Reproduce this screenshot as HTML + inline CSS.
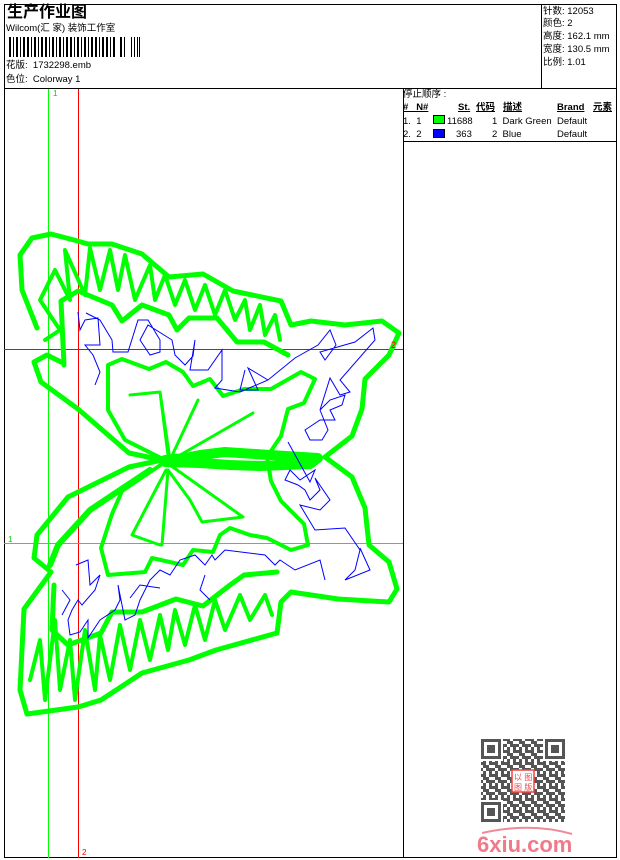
<!DOCTYPE html>
<html><head><meta charset="utf-8"><style>
body{margin:0;width:620px;height:860px;background:#fff;position:relative;overflow:hidden;font-family:"Liberation Sans","WenQuanYi Zen Hei","Noto Sans CJK SC",sans-serif;font-size:9.5px;color:#000}
.t{position:absolute;white-space:nowrap;line-height:10px}
</style></head><body>
<svg width="620" height="860" style="position:absolute;left:0;top:0">
<g stroke="#000" stroke-width="1" fill="none">
<rect x="4.5" y="4.5" width="612" height="853"/>
<line x1="541.5" y1="4" x2="541.5" y2="88"/>
<line x1="4" y1="88.5" x2="617" y2="88.5"/>
<line x1="403.5" y1="88" x2="403.5" y2="858"/>
<line x1="403" y1="141.5" x2="617" y2="141.5"/>
</g>
<g fill="#000">
<rect x="9" y="37" width="2" height="20"/><rect x="13" y="37" width="1" height="20"/><rect x="16" y="37" width="2" height="20"/><rect x="20" y="37" width="1" height="20"/><rect x="23" y="37" width="2" height="20"/><rect x="27" y="37" width="2" height="20"/><rect x="31" y="37" width="1" height="20"/><rect x="34" y="37" width="2" height="20"/><rect x="38" y="37" width="1" height="20"/><rect x="41" y="37" width="2" height="20"/><rect x="45" y="37" width="2" height="20"/><rect x="49" y="37" width="1" height="20"/><rect x="52" y="37" width="2" height="20"/><rect x="56" y="37" width="1" height="20"/><rect x="59" y="37" width="2" height="20"/><rect x="63" y="37" width="1" height="20"/><rect x="66" y="37" width="2" height="20"/><rect x="70" y="37" width="2" height="20"/><rect x="74" y="37" width="1" height="20"/><rect x="77" y="37" width="2" height="20"/><rect x="81" y="37" width="1" height="20"/><rect x="84" y="37" width="2" height="20"/><rect x="88" y="37" width="1" height="20"/><rect x="91" y="37" width="2" height="20"/><rect x="95" y="37" width="2" height="20"/><rect x="99" y="37" width="1" height="20"/><rect x="102" y="37" width="2" height="20"/><rect x="106" y="37" width="2" height="20"/><rect x="110" y="37" width="1" height="20"/><rect x="113" y="37" width="2" height="20"/><rect x="120" y="37" width="2" height="20"/><rect x="124" y="37" width="1" height="20"/><rect x="131" y="37" width="1" height="20"/><rect x="134" y="37" width="1" height="20"/><rect x="137" y="37" width="1" height="20"/><rect x="139" y="37" width="1" height="20"/>
</g>
<rect x="433.5" y="115.5" width="11" height="8" fill="#00ff00" stroke="#000"/>
<rect x="433.5" y="129.5" width="11" height="8" fill="#0000ff" stroke="#000"/>
<line x1="48.5" y1="89" x2="48.5" y2="858" stroke="#00ff00"/>
<line x1="78.5" y1="89" x2="78.5" y2="858" stroke="#ff0000"/>
<line x1="4" y1="349.5" x2="403" y2="349.5" stroke="#ff0000"/>
<line x1="4" y1="543.5" x2="403" y2="543.5" stroke="#00ff00"/>
<g fill="none" stroke="#00ff00" stroke-linejoin="round" stroke-linecap="round">
<path stroke-width="5" d="M37,328 L22,290 L20,255 L32,238 L51,234 L74,240 L88,244 L112,244 L142,254 L169,277 L203,274 L233,291 L281,301 L291,325 L311,321 L345,325 L382,321 L399,333 L389,355 L365,379 L362,409 L352,436 L325,457 L352,477 L365,508 L369,545 L389,562 L397,589 L389,602 L338,599 L291,592 L281,602 L277,633 L216,650 L189,660 L142,673 L101,700 L78,707 L27,714 L20,690 L24,609 L51,572 L34,558 L37,535 L68,497 L129,467 L162,460 L129,453 L78,409 L41,382 L34,362 L47,355 L61,362"/>
<path stroke-width="5" d="M64,365 L61,301 L78,291 L112,305 L122,321 L142,305 L169,315 L177,330 L189,318 L217,318 L237,342 L264,342 L288,355"/>
<path stroke-width="4" d="M165,460 L125,440 L108,410 L108,365 L122,359 L149,369 L166,362 L183,372 L193,386 L210,379 L223,396 L244,389 L271,389 L301,372 L315,379 L304,403 L288,409 L281,436 L267,457 L271,481 L281,501 L304,524 L308,545 L291,550 L267,538 L250,535 L230,528 L220,535 L213,552 L193,550 L183,565 L152,558 L145,572 L108,575 L101,548 L112,514 L122,491 L165,462"/>
<path stroke-width="5" d="M54,585 L52,630 L68,645 L101,633 L112,612 L142,612 L176,599 L203,606 L230,585 L244,575 L277,572"/>
<path stroke-width="4" d="M45,340 L60,330 L40,300 L55,270 L70,300 L65,250 L85,295 L90,248 L100,290 L110,250 L118,290 L125,255 L135,300 L150,265 L155,300 L165,275 L175,305 L185,280 L195,310 L205,285 L215,315 L225,290 L235,320 L245,300 L250,330 L260,305 L265,335 L275,315 L280,340"/>
<path stroke-width="4" d="M30,680 L40,640 L45,700 L55,620 L60,690 L70,640 L75,700 L85,630 L95,690 L100,635 L110,680 L120,625 L130,670 L140,620 L150,660 L160,615 L168,650 L175,610 L185,645 L195,605 L205,640 L215,600 L225,630 L240,595 L250,620 L265,595 L272,615"/>
<path stroke-width="3" d="M130,395 L160,392 L168,455 M160,392 L170,460 L198,400 M175,458 L253,413 M170,465 L243,517 L202,522 L190,500 L168,470 M168,470 L162,545 M166,470 L132,535 L160,545"/>
<path stroke-width="10" d="M165,460 L185,458 L200,455 L225,452 L270,455 L318,458 L310,464 L260,466 L230,465 L200,463 L165,462"/>
<path stroke-width="6" d="M150,470 L90,510 L58,545 L50,565"/>
</g>
<g fill="none" stroke="#0000ff" stroke-width="1">
<path d="M78,312 L80,330 L85,320 L98,318 L100,345 L85,345 L93,355 L100,372 L95,385 M86,313 L100,320 L112,340 L113,352 L128,352 L138,320 L148,320 L160,340 L160,352 L150,355 L140,340 L148,325 L172,340 L175,355 L185,365 L193,356 L195,340 L190,370 L208,370 L222,350 L222,380 L215,388 L240,392 L268,380 L295,358 L318,345 L330,330 L336,345 L325,360 L320,352 L355,342 L373,328 L375,340 L340,380 L350,392 L340,395 L330,378 L320,410 L330,400 L345,395 L342,405 L330,410 L335,420 L320,420 L305,430 L310,440 L322,440 L328,430 L320,410 M268,380 L248,368 L258,390 L240,390 L245,370 M288,442 L310,482 L315,470 L300,480 L290,470 L285,480 L298,485 L305,490 L310,500 L320,490 L315,478 L330,500 L320,510 L300,505 L315,530 L345,528 L360,550 L355,570 L345,580 L370,570 L360,548"/>
<path d="M76,565 L88,560 L90,585 L100,575 L95,590 L82,605 L78,600 L72,610 L68,620 L70,635 L80,632 L88,620 L88,638 L100,620 L115,610 L120,600 L118,585 L125,620 L135,615 L140,600 L150,580 L160,570 L170,575 L180,560 L195,555 L205,565 L212,555 L215,560 L225,550 L265,555 L275,565 L280,560 L295,570 L320,560 L325,580"/>
<path d="M62,590 L70,600 L62,615 M130,598 L140,585 L160,588 M205,575 L200,590 L210,600"/>
</g>
<defs>
<pattern id="qp" width="12" height="12" patternUnits="userSpaceOnUse">
<rect x="0" y="0" width="3" height="3" fill="#555"/><rect x="6" y="0" width="6" height="3" fill="#555"/><rect x="3" y="3" width="3" height="3" fill="#555"/><rect x="9" y="3" width="3" height="3" fill="#555"/><rect x="0" y="6" width="6" height="3" fill="#555"/><rect x="9" y="6" width="3" height="3" fill="#555"/><rect x="3" y="9" width="6" height="3" fill="#555"/>
</pattern>
</defs>
<rect x="481" y="739" width="84" height="83" fill="url(#qp)"/>
<g fill="#fff"><rect x="481" y="739" width="22" height="22"/><rect x="543" y="739" width="22" height="22"/><rect x="481" y="800" width="22" height="22"/></g>
<g fill="none" stroke="#555" stroke-width="3"><rect x="482.5" y="740.5" width="17" height="17"/><rect x="546.5" y="740.5" width="17" height="17"/><rect x="482.5" y="803.5" width="17" height="17"/></g>
<g fill="#555"><rect x="487" y="745" width="8" height="8"/><rect x="551" y="745" width="8" height="8"/><rect x="487" y="808" width="8" height="8"/></g>
<rect x="512" y="770" width="22" height="22" fill="#fff" stroke="#ef4444" stroke-width="1.5"/>
<text x="514" y="780" font-size="8" fill="#ef4444" font-family="WenQuanYi Zen Hei,sans-serif">以 图</text>
<text x="514" y="790" font-size="8" fill="#ef4444" font-family="WenQuanYi Zen Hei,sans-serif">图 版</text>
<path d="M482,833 Q530,822 572,834" fill="none" stroke="#f08a98" stroke-width="2"/>
<text x="477" y="852" font-size="22" font-weight="bold" fill="#f07a88" font-family="Liberation Sans,sans-serif">6xiu.com</text>
</svg>
<div class="t" style="left:7px;top:4px;font-size:16px;font-weight:bold;line-height:17px">生产作业图</div>
<div class="t" style="left:6px;top:24px">Wilcom(汇 家) 装饰工作室</div>
<div class="t" style="left:6px;top:61px">花版:&nbsp; 1732298.emb</div>
<div class="t" style="left:6px;top:75px">色位:&nbsp; Colorway 1</div>
<div class="t" style="left:543px;top:7px">针数:&nbsp;12053</div>
<div class="t" style="left:543px;top:19px">颜色:&nbsp;2</div>
<div class="t" style="left:543px;top:32px">高度:&nbsp;162.1 mm</div>
<div class="t" style="left:543px;top:45px">宽度:&nbsp;130.5 mm</div>
<div class="t" style="left:543px;top:58px">比例:&nbsp;1.01</div>
<div class="t" style="left:403px;top:90px">停止顺序 :</div>
<div class="t" style="left:403px;top:103px;font-weight:bold;text-decoration:underline">#&nbsp;&nbsp; N#</div>
<div class="t" style="left:458px;top:103px;font-weight:bold;text-decoration:underline">St.</div>
<div class="t" style="left:476px;top:103px;font-weight:bold;text-decoration:underline">代码</div>
<div class="t" style="left:503px;top:103px;font-weight:bold;text-decoration:underline">描述</div>
<div class="t" style="left:557px;top:103px;font-weight:bold;text-decoration:underline">Brand</div>
<div class="t" style="left:593px;top:103px;font-weight:bold;text-decoration:underline">元素</div>
<div class="t" style="left:403px;top:117px">1.&nbsp; 1</div>
<div class="t" style="left:447px;top:117px">11688</div>
<div class="t" style="left:492px;top:117px">1&nbsp; Dark Green</div>
<div class="t" style="left:557px;top:117px">Default</div>
<div class="t" style="left:403px;top:130px">2.&nbsp; 2</div>
<div class="t" style="left:456px;top:130px">363</div>
<div class="t" style="left:492px;top:130px">2&nbsp; Blue</div>
<div class="t" style="left:557px;top:130px">Default</div>
<div class="t" style="left:53px;top:89px;color:#00cc00;font-size:8px">1</div>
<div class="t" style="left:391px;top:340px;color:#ff0000;font-size:9px">2</div>
<div class="t" style="left:8px;top:535px;color:#00cc00;font-size:8px">1</div>
<div class="t" style="left:82px;top:848px;color:#ff0000;font-size:8px">2</div>
</body></html>
